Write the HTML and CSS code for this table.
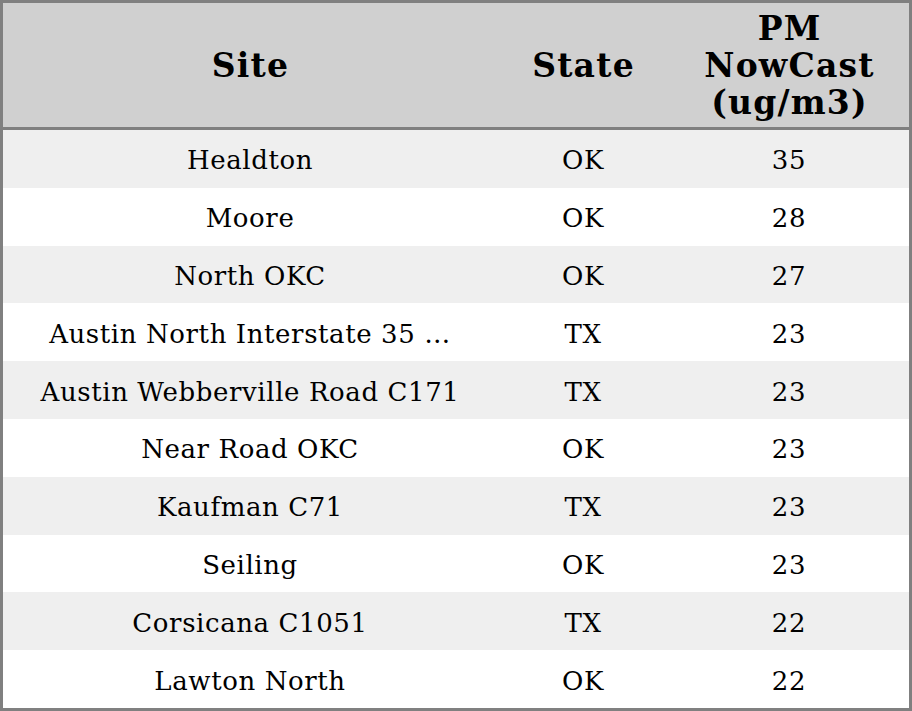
FILE: index.html
```html
<!DOCTYPE html>
<html>
<head>
<meta charset="utf-8">
<link rel="stylesheet" href="styles.css">
</head>
<body>
<table class="aq-table">
  <colgroup>
    <col class="col-site">
    <col class="col-state">
    <col class="col-pm">
  </colgroup>
  <thead>
    <tr class="head-row">
      <th>Site</th>
      <th>State</th>
      <th>PM<br>NowCast<br>(ug/m3)</th>
    </tr>
  </thead>
  <tbody>
    <tr><td>Healdton</td><td>OK</td><td>35</td></tr>
    <tr><td>Moore</td><td>OK</td><td>28</td></tr>
    <tr><td>North OKC</td><td>OK</td><td>27</td></tr>
    <tr><td>Austin North Interstate 35 …</td><td>TX</td><td>23</td></tr>
    <tr><td>Austin Webberville Road C171</td><td>TX</td><td>23</td></tr>
    <tr><td>Near Road OKC</td><td>OK</td><td>23</td></tr>
    <tr><td>Kaufman C71</td><td>TX</td><td>23</td></tr>
    <tr><td>Seiling</td><td>OK</td><td>23</td></tr>
    <tr><td>Corsicana C1051</td><td>TX</td><td>22</td></tr>
    <tr><td>Lawton North</td><td>OK</td><td>22</td></tr>
  </tbody>
</table>
</body>
</html>
```

FILE: styles.css
```css
html, body {
  margin: 0;
  padding: 0;
  background: #ffffff;
}

.aq-table {
  width: 912px;
  border-collapse: separate;
  border-spacing: 0;
  border: 3px solid #808080;
  table-layout: fixed;
  font-family: "DejaVu Serif", serif;
  color: #000;
}

.col-site { width: 494px; }
.col-state { width: 172px; }
.col-pm { width: 240px; }

.head-row th {
  background: #d0d0d0;
  font-size: 33px;
  font-weight: bold;
  letter-spacing: 1.2px;
  line-height: 37px;
  height: 127px;
  padding: 0 0 0 1px;
  text-align: center;
  vertical-align: middle;
  border-bottom: 3px solid #808080;
  box-sizing: border-box;
}

.aq-table tbody tr {
  height: 57.8px;
}

.aq-table td {
  font-size: 26px;
  letter-spacing: 0.6px;
  line-height: 30px;
  padding: 3px 0 0 0;
  text-align: center;
  vertical-align: middle;
  white-space: nowrap;
}

.aq-table tbody tr:nth-child(odd) td {
  background: #efefef;
}
```
